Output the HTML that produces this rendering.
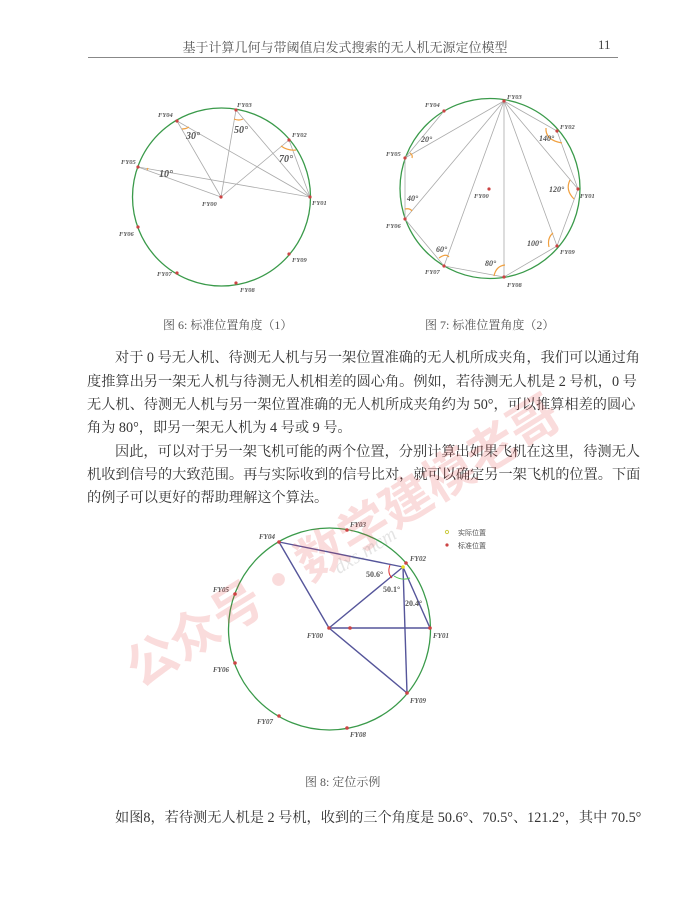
<!DOCTYPE html>
<html><head><meta charset="utf-8"><style>
body{margin:0;background:#fff;width:700px;height:905px;position:relative;overflow:hidden;font-family:"Liberation Serif","Noto Serif CJK SC",serif;color:#333}
.l{position:absolute;left:87px;width:528px;font-size:14.2px;height:20px;line-height:20px;white-space:nowrap;text-align:justify;text-align-last:justify}
.i{left:115px;width:500px}
.n{text-align-last:left}
.cap{position:absolute;font-size:12px;color:#555;white-space:nowrap}
svg text{font-family:"Liberation Serif",serif;font-style:italic;font-weight:bold;fill:#555}
</style></head><body>
<div style="position:absolute;left:0;width:700px;top:37px;text-align:center;font-size:13px;color:#555"><span style="position:relative;left:-5px">基于计算几何与带阈值启发式搜索的无人机无源定位模型</span></div>
<div style="position:absolute;left:598px;top:37px;font-size:13px;color:#444">11</div>
<div style="position:absolute;left:88px;top:57px;width:530px;height:1px;background:#888"></div>

<svg width="700" height="905" style="position:absolute;left:0;top:0">
<circle cx="221.5" cy="197" r="89" fill="none" stroke="#3a9a4a" stroke-width="1.3"/>
<g stroke="#aaa" stroke-width="0.8" fill="none">
<line x1="177" y1="121" x2="221" y2="197"/><line x1="177" y1="121" x2="310" y2="197"/>
<line x1="236" y1="110" x2="221" y2="197"/><line x1="236" y1="110" x2="310" y2="197"/>
<line x1="289" y1="140" x2="221" y2="197"/><line x1="289" y1="140" x2="310" y2="197"/>
<line x1="138" y1="167" x2="221" y2="197"/><line x1="138" y1="167" x2="310" y2="197"/>
</g>
<g stroke="#f0a040" stroke-width="1.2" fill="none">
<path d="M182 129 Q186 129 189 127"/><path d="M234 119 Q239 121 243 119"/><path d="M281 146 Q288 151 296 150"/><path d="M147 170 L148 168"/>
</g>
<g fill="#c44">
<circle cx="221" cy="197" r="1.6"/><circle cx="310" cy="197" r="1.6"/><circle cx="289" cy="140" r="1.6"/><circle cx="236" cy="110" r="1.6"/><circle cx="177" cy="121" r="1.6"/><circle cx="138" cy="167" r="1.6"/><circle cx="138" cy="227" r="1.6"/><circle cx="177" cy="273" r="1.6"/><circle cx="236" cy="283" r="1.6"/><circle cx="289" cy="254" r="1.6"/>
</g>
<g font-size="6.5">
<text x="158" y="117">FY04</text><text x="237" y="107">FY03</text><text x="292" y="137">FY02</text><text x="121" y="164">FY05</text><text x="312" y="205">FY01</text><text x="202" y="206">FY00</text><text x="119" y="236">FY06</text><text x="157" y="276">FY07</text><text x="240" y="292">FY08</text><text x="292" y="262">FY09</text>
</g>
<g font-size="10"><text x="186" y="139">30°</text><text x="234" y="133">50°</text><text x="279" y="162">70°</text><text x="159" y="177">10°</text></g>

<circle cx="490" cy="188.5" r="90" fill="none" stroke="#3a9a4a" stroke-width="1.3"/>
<g stroke="#aaa" stroke-width="0.8" fill="none">
<polyline points="444,111 405,158 504,101 405,219 444,266 504,101 504,277 444,266"/>
<polyline points="504,101 557,131 578,189 504,101 557,246 578,189"/>
<polyline points="405,158 405,219"/><polyline points="504,277 557,246"/>
</g>
<g stroke="#f0a040" stroke-width="1.2" fill="none">
<path d="M546 128 Q545 140 562 143"/><path d="M570 180 Q565 190 574 199"/><path d="M549 247 Q547 238 553 233"/><path d="M494 276 Q496 266 505 265"/><path d="M439 258 Q446 253 449 257"/><path d="M405 209 Q410 208 412 211"/><path d="M410 153 Q413 155 412 158"/>
</g>
<g fill="#c44">
<circle cx="504" cy="101" r="1.6"/><circle cx="444" cy="111" r="1.6"/><circle cx="557" cy="131" r="1.6"/><circle cx="405" cy="158" r="1.6"/><circle cx="578" cy="189" r="1.6"/><circle cx="405" cy="219" r="1.6"/><circle cx="557" cy="246" r="1.6"/><circle cx="444" cy="266" r="1.6"/><circle cx="504" cy="277" r="1.6"/><circle cx="489" cy="189" r="1.6"/>
</g>
<g font-size="6.5">
<text x="425" y="107">FY04</text><text x="507" y="99">FY03</text><text x="560" y="129">FY02</text><text x="386" y="156">FY05</text><text x="580" y="198">FY01</text><text x="474" y="198">FY00</text><text x="386" y="228">FY06</text><text x="425" y="274">FY07</text><text x="507" y="287">FY08</text><text x="560" y="254">FY09</text>
</g>
<g font-size="8" font-weight="normal"><text x="539" y="141">140°</text><text x="549" y="192">120°</text><text x="527" y="246">100°</text><text x="485" y="266">80°</text><text x="436" y="252">60°</text><text x="407" y="201">40°</text><text x="421" y="142">20°</text></g>

<circle cx="329.5" cy="629" r="101" fill="none" stroke="#3a9a4a" stroke-width="1.3"/>
<g stroke="#55559a" stroke-width="1.4" fill="none">
<line x1="279" y1="542" x2="403" y2="567"/><line x1="279" y1="542" x2="329" y2="628"/><line x1="329" y1="628" x2="403" y2="567"/><line x1="329" y1="628" x2="430" y2="628"/><line x1="329" y1="628" x2="407" y2="693"/><line x1="403" y1="567" x2="430" y2="628"/><line x1="403" y1="567" x2="407" y2="693"/>
</g>
<path d="M390 565 Q387 573 392 578" stroke="#e03030" fill="none" stroke-width="1"/>
<path d="M394 576 Q402 581 410 578" stroke="#50c050" fill="none" stroke-width="1"/>
<g fill="#c44">
<circle cx="279" cy="542" r="1.8"/><circle cx="347" cy="530" r="1.8"/><circle cx="406" cy="563" r="1.8"/><circle cx="430" cy="628" r="1.8"/><circle cx="329" cy="628" r="1.8"/><circle cx="350" cy="628" r="1.8"/><circle cx="235" cy="594" r="1.8"/><circle cx="235" cy="663" r="1.8"/><circle cx="279" cy="716" r="1.8"/><circle cx="347" cy="728" r="1.8"/><circle cx="407" cy="693" r="1.8"/>
</g>
<circle cx="403" cy="567" r="1.8" fill="#e8e020"/>
<g font-size="7">
<text x="259" y="539">FY04</text><text x="350" y="527">FY03</text><text x="410" y="561">FY02</text><text x="213" y="592">FY05</text><text x="433" y="638">FY01</text><text x="307" y="638">FY00</text><text x="213" y="672">FY06</text><text x="257" y="724">FY07</text><text x="350" y="737">FY08</text><text x="410" y="703">FY09</text>
</g>
<g font-size="8"><text x="366" y="577" style="font-style:normal">50.6°</text><text x="383" y="592" style="font-style:normal">50.1°</text><text x="405" y="606" style="font-style:normal">20.4°</text></g>
<circle cx="447" cy="532" r="1.6" fill="none" stroke="#cc4"/><circle cx="447" cy="545" r="1.6" fill="#c44"/>
<text x="458" y="535" font-size="7" style="font-style:normal;font-weight:normal;font-family:'Noto Sans CJK SC',sans-serif">实际位置</text>
<text x="458" y="548" font-size="7" style="font-style:normal;font-weight:normal;font-family:'Noto Sans CJK SC',sans-serif">标准位置</text>
</svg>

<div class="cap" style="left:163px;top:316px">图 6: 标准位置角度（1）</div>
<div class="cap" style="left:425px;top:316px">图 7: 标准位置角度（2）</div>

<div class="l i" style="top:348px">对于 0 号无人机、待测无人机与另一架位置准确的无人机所成夹角，我们可以通过角</div>
<div class="l" style="top:372px">度推算出另一架无人机与待测无人机相差的圆心角。例如，若待测无人机是 2 号机，0 号</div>
<div class="l" style="top:395px">无人机、待测无人机与另一架位置准确的无人机所成夹角约为 50°，可以推算相差的圆心</div>
<div class="l n" style="top:418px">角为 80°，即另一架无人机为 4 号或 9 号。</div>
<div class="l i" style="top:442px">因此，可以对于另一架飞机可能的两个位置，分别计算出如果飞机在这里，待测无人</div>
<div class="l" style="top:465px">机收到信号的大致范围。再与实际收到的信号比对，就可以确定另一架飞机的位置。下面</div>
<div class="l n" style="top:488px">的例子可以更好的帮助理解这个算法。</div>

<div class="cap" style="left:305px;top:773px">图 8: 定位示例</div>
<div class="l i" style="top:808px">如图8，若待测无人机是 2 号机，收到的三个角度是 50.6°、70.5°、121.2°，其中 70.5°</div>

<div style="position:absolute;left:110px;top:640px;font-size:50px;color:rgba(230,60,60,0.18);transform:rotate(-32deg);transform-origin:left top;white-space:nowrap;font-family:'Noto Sans CJK SC',sans-serif;font-weight:bold">公众号·数学建模老哥</div>
<div style="position:absolute;left:330px;top:560px;font-size:20px;color:rgba(120,120,120,0.2);transform:rotate(-32deg);transform-origin:left top;font-style:italic">dxs.mcm</div>
</body></html>
